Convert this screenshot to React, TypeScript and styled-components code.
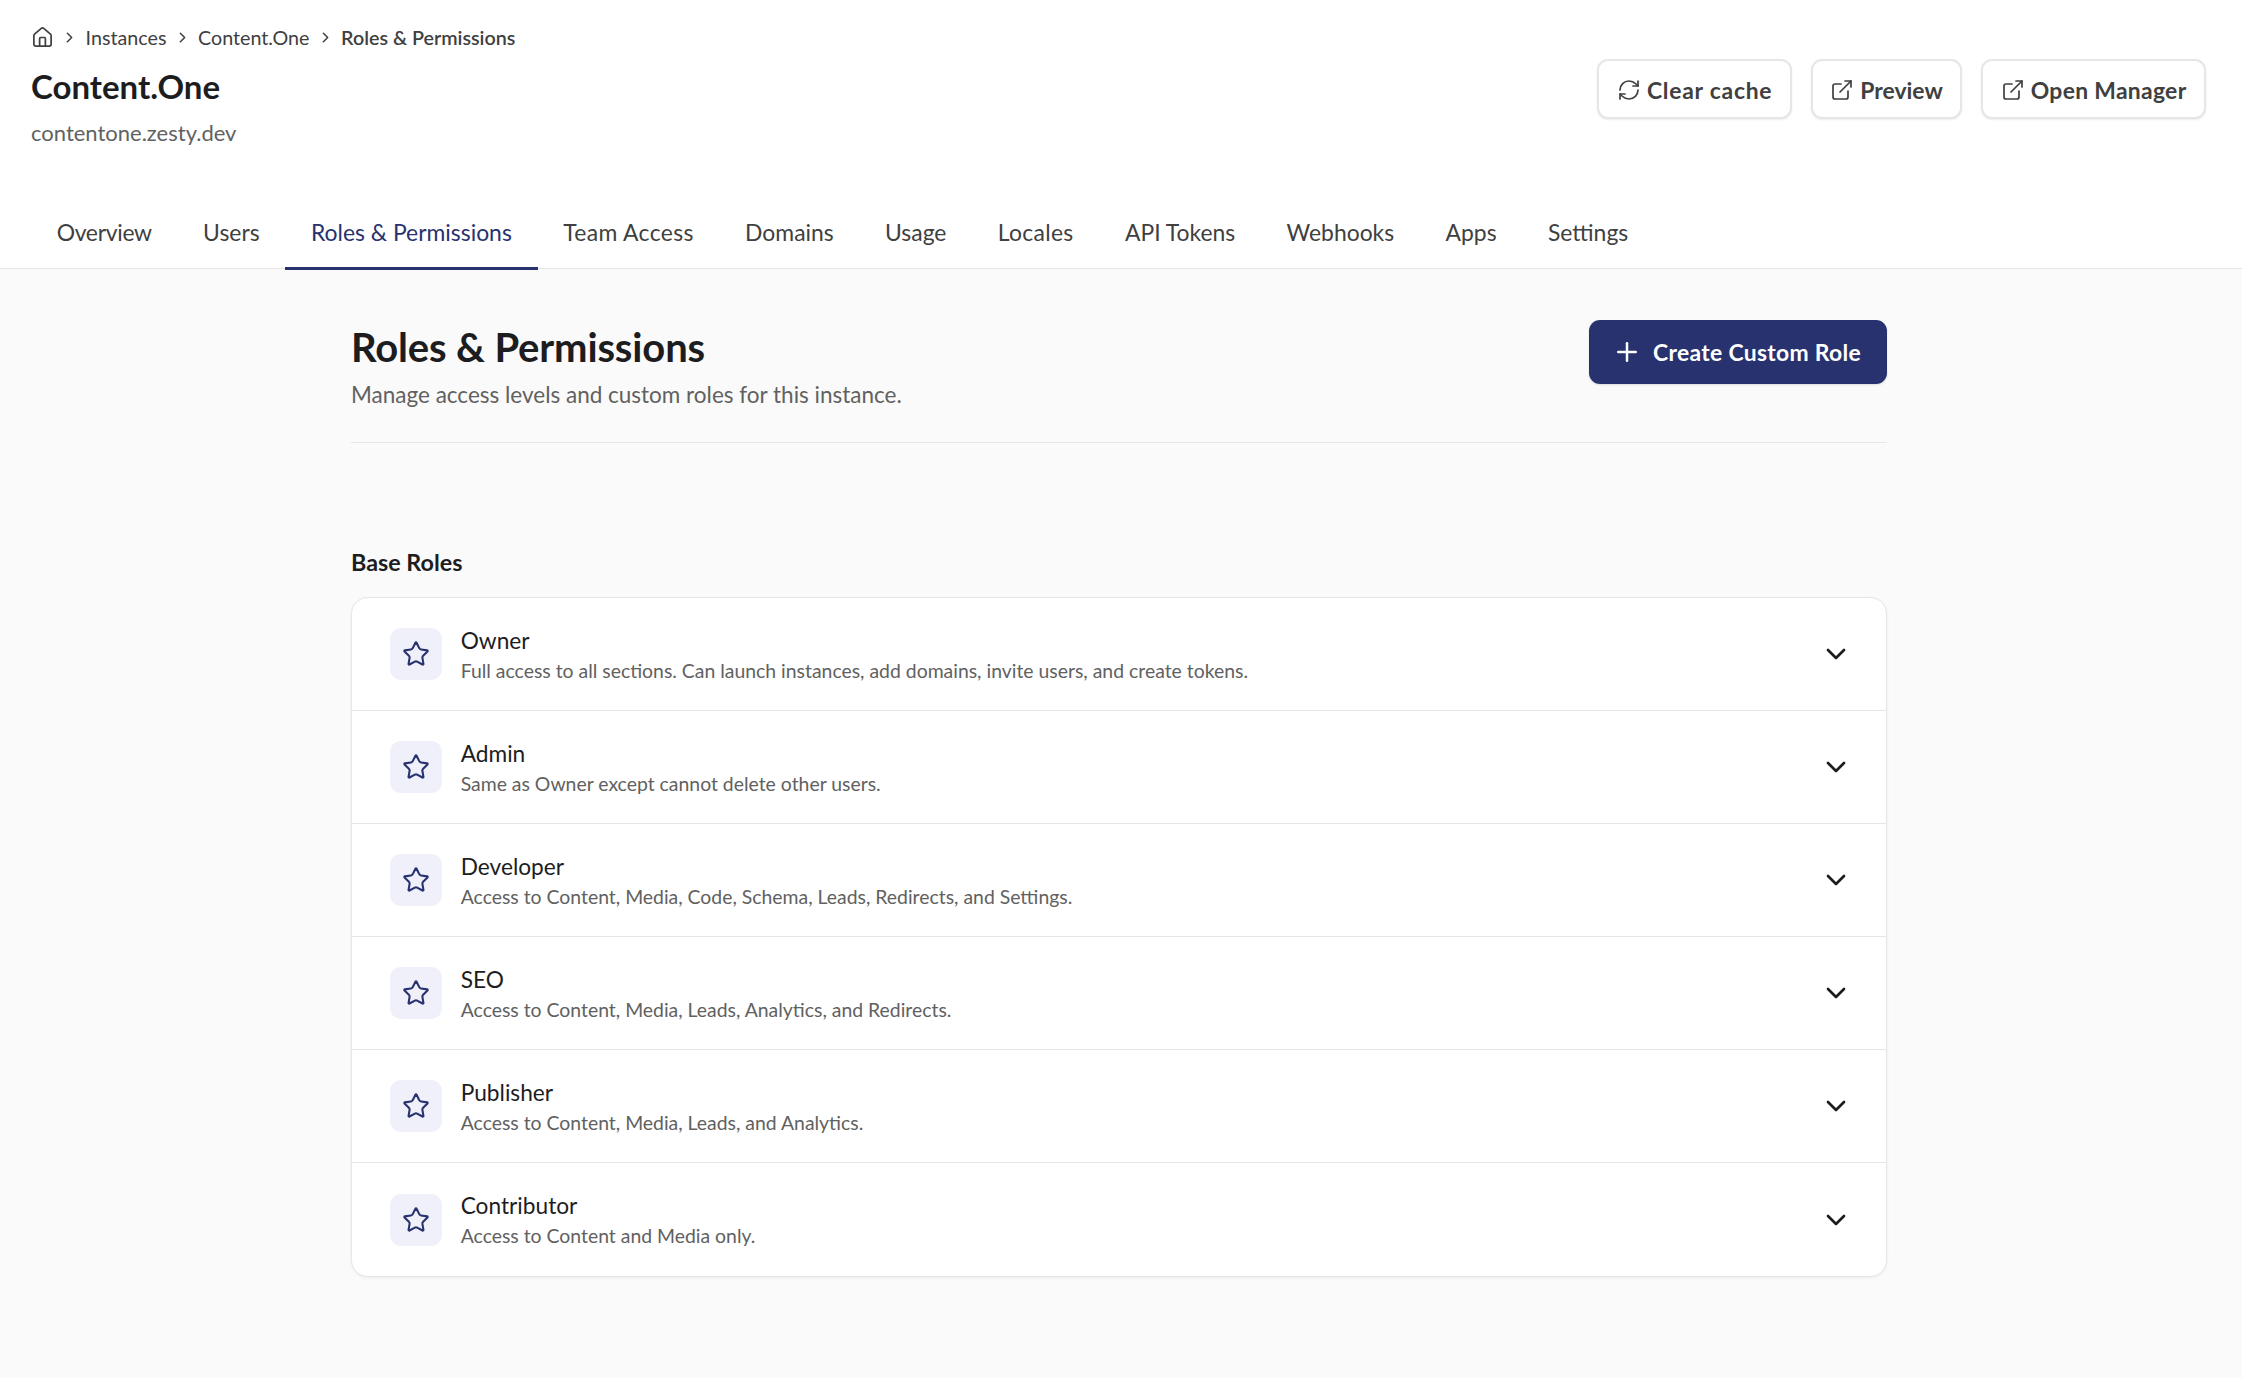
import styled, { createGlobalStyle } from "styled-components";
import { ChevronDown, ChevronRight, ExternalLink, House, Plus, RefreshCw, Star } from "lucide-react";

const COLORS = {
  navy: "#27326f",
  ink: "#1d1d1f",
  text: "#404040",
  muted: "#616161",
  line: "#e6e6e6",
  page: "#fafafa",
  white: "#ffffff",
  tint: "#eff0f9",
};

const GlobalStyle = createGlobalStyle`
  * { box-sizing: border-box; }
  html, body { margin: 0; padding: 0; }
  body {
    background: ${COLORS.page};
    font-family: "Lato", "Liberation Sans", sans-serif;
    color: ${COLORS.ink};
  }
`;

const S = {
  Page: styled.div`
    min-height: 1378px;
    background: ${COLORS.page};
  `,
  Header: styled.header`
    background: ${COLORS.white};
    border-bottom: 1.5px solid ${COLORS.line};
    padding: 25px 36px 0 31px;
  `,
  TopRow: styled.div`
    display: flex;
    justify-content: space-between;
    align-items: flex-start;
    height: 175px;
  `,
  Breadcrumbs: styled.nav`
    display: flex;
    align-items: center;
    height: 25px;
    font-size: 19.7px;
    color: ${COLORS.text};
  `,
  Sep: styled(ChevronRight)`
    margin: 0 7.3px;
  `,
  Current: styled.span`
    font-weight: 600;
  `,
  InstanceName: styled.h1`
    margin: 13px 0 0;
    font-size: 33px;
    line-height: 46px;
    font-weight: 700;
    color: ${COLORS.ink};
  `,
  Host: styled.p`
    margin: 8px 0 0;
    font-size: 22px;
    line-height: 32px;
    font-weight: 400;
    color: ${COLORS.muted};
  `,
  Actions: styled.div`
    display: flex;
    gap: 19px;
    margin-top: 34px;
  `,
  GhostButton: styled.button<{ $tracking?: number }>`
    display: flex;
    align-items: center;
    gap: 6px;
    height: 60px;
    padding: 2px 17.5px 0;
    background: ${COLORS.white};
    border: 2px solid ${COLORS.line};
    border-radius: 11px;
    box-shadow: 0 1px 2px rgba(0, 0, 0, 0.08);
    font-family: inherit;
    font-size: 22.9px;
    font-weight: 700;
    letter-spacing: ${(p) => p.$tracking ?? 0.3}px;
    color: ${COLORS.text};
  `,
  Tabs: styled.nav`
    display: flex;
    height: 68px;
  `,
  Tab: styled.a<{ $active?: boolean; $tracking: number }>`
    display: flex;
    align-items: center;
    padding: 0 25.7px 2px;
    font-size: 22.9px;
    letter-spacing: ${(p) => p.$tracking}px;
    color: ${(p) => (p.$active ? COLORS.navy : COLORS.text)};
    border-bottom: 3px solid ${(p) => (p.$active ? COLORS.navy : "transparent")};
    margin-bottom: -1.5px;
  `,
  Main: styled.main`
    width: 1536px;
    margin: 0 0 0 351px;
    padding-top: 51px;
  `,
  PageHead: styled.div`
    display: flex;
    justify-content: space-between;
    align-items: flex-start;
    height: 123px;
    border-bottom: 1.5px solid ${COLORS.line};
  `,
  PageTitle: styled.h2`
    margin: 0;
    font-size: 40px;
    line-height: 54px;
    font-weight: 700;
    letter-spacing: -0.15px;
    color: ${COLORS.ink};
  `,
  PageSub: styled.p`
    margin: 4px 0 0;
    font-size: 22.5px;
    line-height: 34px;
    font-weight: 400;
    color: ${COLORS.muted};
  `,
  CreateButton: styled.button`
    display: flex;
    align-items: center;
    gap: 11.5px;
    height: 64px;
    padding: 0 26px 0 23px;
    background: ${COLORS.navy};
    border: 0;
    border-radius: 11px;
    box-shadow: 0 1px 2px rgba(0, 0, 0, 0.12);
    font-family: inherit;
    font-size: 22.9px;
    font-weight: 700;
    letter-spacing: 0.3px;
    color: ${COLORS.white};
  `,
  SectionTitle: styled.h3`
    margin: 103px 0 0;
    font-size: 23.3px;
    line-height: 32px;
    font-weight: 700;
    color: ${COLORS.ink};
  `,
  Card: styled.div`
    margin-top: 19px;
    background: ${COLORS.white};
    border: 1.5px solid ${COLORS.line};
    border-radius: 17px;
    box-shadow: 0 1px 3px rgba(0, 0, 0, 0.06);
    overflow: hidden;
  `,
  Row: styled.div`
    display: flex;
    align-items: center;
    height: 113px;
    padding: 0 34px 0 37.7px;
    &:not(:last-child) {
      border-bottom: 1.5px solid ${COLORS.line};
    }
  `,
  RoleIcon: styled.div`
    flex: none;
    display: flex;
    align-items: center;
    justify-content: center;
    width: 52px;
    height: 52px;
    border-radius: 11px;
    background: ${COLORS.tint};
    color: ${COLORS.navy};
  `,
  RoleText: styled.div`
    flex: 1;
    margin: 3px 0 0 19px;
  `,
  RoleName: styled.div`
    font-size: 22.7px;
    line-height: 30px;
    color: ${COLORS.ink};
  `,
  RoleDesc: styled.div`
    font-size: 19.4px;
    line-height: 30px;
    color: ${COLORS.muted};
  `,
};

const TABS = [
  { label: "Overview", tracking: -0.3 },
  { label: "Users", tracking: 0 },
  { label: "Roles & Permissions", tracking: 0 },
  { label: "Team Access", tracking: 0.35 },
  { label: "Domains", tracking: 0 },
  { label: "Usage", tracking: 0 },
  { label: "Locales", tracking: 0.3 },
  { label: "API Tokens", tracking: 0 },
  { label: "Webhooks", tracking: 0 },
  { label: "Apps", tracking: 0 },
  { label: "Settings", tracking: 0 },
];

const ROLES = [
  { name: "Owner", desc: "Full access to all sections. Can launch instances, add domains, invite users, and create tokens." },
  { name: "Admin", desc: "Same as Owner except cannot delete other users." },
  { name: "Developer", desc: "Access to Content, Media, Code, Schema, Leads, Redirects, and Settings." },
  { name: "SEO", desc: "Access to Content, Media, Leads, Analytics, and Redirects." },
  { name: "Publisher", desc: "Access to Content, Media, Leads, and Analytics." },
  { name: "Contributor", desc: "Access to Content and Media only." },
];

export default function App() {
  return (
    <S.Page>
      <GlobalStyle />
      <S.Header>
        <S.TopRow>
          <div>
            <S.Breadcrumbs>
              <House size={23} strokeWidth={1.8} />
              <S.Sep size={17} strokeWidth={2.2} />
              <span>Instances</span>
              <S.Sep size={17} strokeWidth={2.2} />
              <span>Content.One</span>
              <S.Sep size={17} strokeWidth={2.2} />
              <S.Current>Roles &amp; Permissions</S.Current>
            </S.Breadcrumbs>
            <S.InstanceName>Content.One</S.InstanceName>
            <S.Host>contentone.zesty.dev</S.Host>
          </div>
          <S.Actions>
            <S.GhostButton $tracking={0.75}>
              <RefreshCw size={24} strokeWidth={1.7} />
              Clear cache
            </S.GhostButton>
            <S.GhostButton $tracking={0}>
              <ExternalLink size={24} strokeWidth={1.7} />
              Preview
            </S.GhostButton>
            <S.GhostButton>
              <ExternalLink size={24} strokeWidth={1.7} />
              Open Manager
            </S.GhostButton>
          </S.Actions>
        </S.TopRow>
        <S.Tabs>
          {TABS.map((t) => (
            <S.Tab key={t.label} $active={t.label === "Roles & Permissions"} $tracking={t.tracking}>
              {t.label}
            </S.Tab>
          ))}
        </S.Tabs>
      </S.Header>
      <S.Main>
        <S.PageHead>
          <div>
            <S.PageTitle>Roles &amp; Permissions</S.PageTitle>
            <S.PageSub>Manage access levels and custom roles for this instance.</S.PageSub>
          </div>
          <S.CreateButton>
            <Plus size={30} strokeWidth={2} />
            Create Custom Role
          </S.CreateButton>
        </S.PageHead>
        <S.SectionTitle>Base Roles</S.SectionTitle>
        <S.Card>
          {ROLES.map((r) => (
            <S.Row key={r.name}>
              <S.RoleIcon>
                <Star size={28} strokeWidth={1.8} />
              </S.RoleIcon>
              <S.RoleText>
                <S.RoleName>{r.name}</S.RoleName>
                <S.RoleDesc>{r.desc}</S.RoleDesc>
              </S.RoleText>
              <ChevronDown size={32} strokeWidth={2} />
            </S.Row>
          ))}
        </S.Card>
      </S.Main>
    </S.Page>
  );
}
